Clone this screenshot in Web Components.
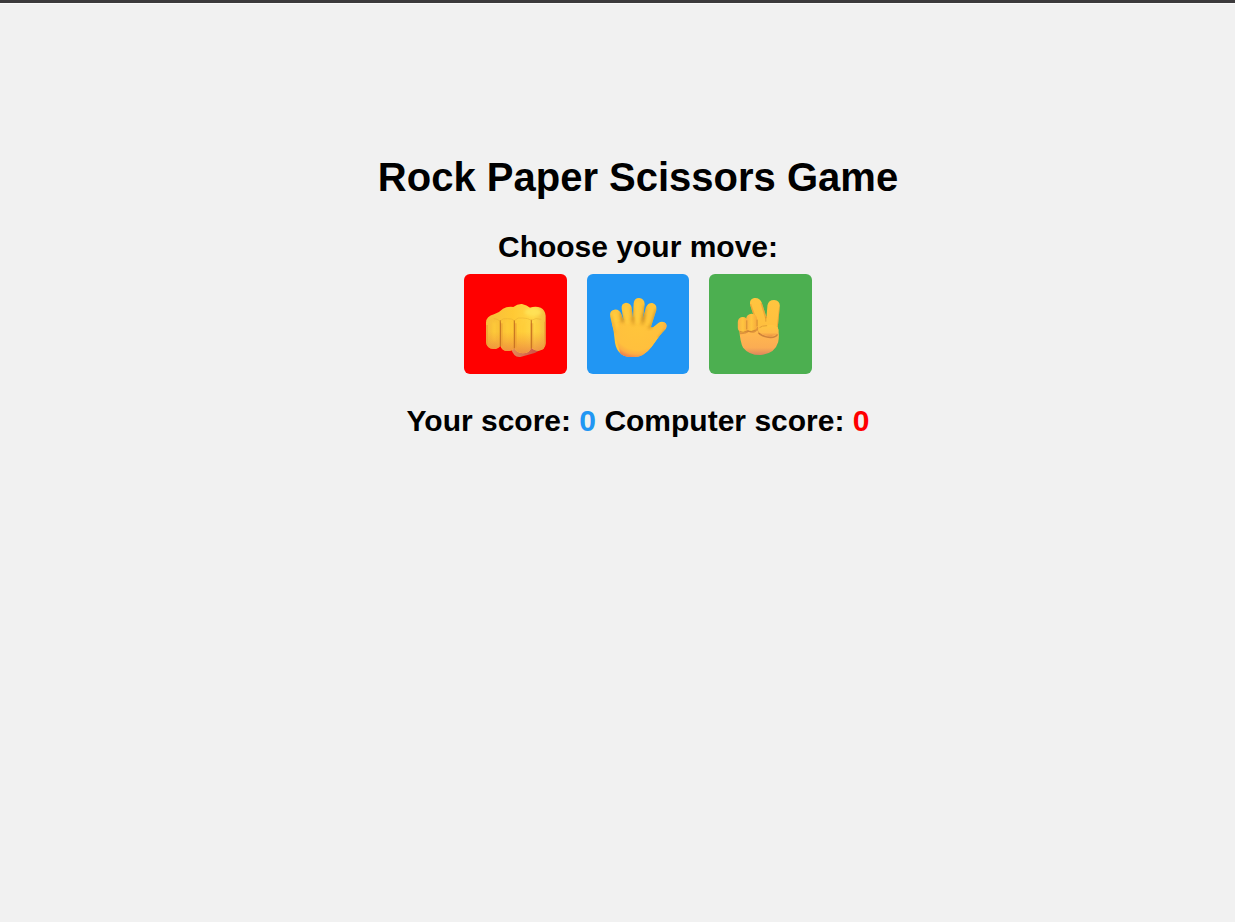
<!DOCTYPE html>
<html lang="en">
<head>
<meta charset="utf-8">
<title>Rock Paper Scissors Game</title>
<style>
html,body{margin:0;height:100%;background:#f1f1f1;overflow:hidden}
body{font-family:"Liberation Sans",Arial,sans-serif;color:#000}
</style>
</head>
<body>
<rps-game></rps-game>
<script>
const HANDS = {
rock: `<svg viewBox="12 12 307.5 300"><defs>
<linearGradient id="b" x1="0" y1="0" x2="1" y2="0"><stop offset="0" stop-color="#f6bd3c"/><stop offset=".45" stop-color="#ffc934"/><stop offset=".8" stop-color="#ffd646"/><stop offset="1" stop-color="#f2bd42"/></linearGradient>
<linearGradient id="s" gradientUnits="userSpaceOnUse" x1="0" y1="185" x2="0" y2="250"><stop offset="0" stop-color="#f08a38" stop-opacity="0"/><stop offset="1" stop-color="#e77a45" stop-opacity=".75"/></linearGradient>
<linearGradient id="t" x1="0" y1="0" x2="1" y2="0"><stop offset="0" stop-color="#e58a58"/><stop offset="1" stop-color="#c84944"/></linearGradient>
<filter id="q" x="-1" width="3"><feGaussianBlur stdDeviation="2.2"/></filter>
<filter id="r" x="-1" width="3"><feGaussianBlur stdDeviation="5"/></filter>
<path id="hand" d="M78 158Q79 138 102 133Q117 128 129 116Q143 109 160 111Q173 101 186 102Q201 105 210 113Q227 107 242 113Q255 119 257 137V220Q256 241 235 242Q222 242 214 233Q208 250 188 250Q169 249 163 234Q158 243 142 243Q126 243 121 227Q115 237 100 237Q80 236 78 216Z"/>
<clipPath id="c"><use href="#hand"/></clipPath></defs>
<path fill="url(#t)" d="M153 235Q161 264 181 261L224 249Q245 241 244 224Z"/>
<use href="#hand" fill="url(#b)"/>
<g clip-path="url(#c)">
<ellipse cx="219" cy="126" rx="25" ry="13" fill="#ffe45a" opacity=".8" filter="url(#r)"/>
<path d="M103 157V216M143 155V220M188 158V220M234 158V215" stroke="#ffce3a" stroke-width="10" opacity=".8" filter="url(#r)"/>
<use href="#hand" fill="url(#s)"/>
<path d="M80 165V225M124 160V228M166 160V232M216 160V233M256 155V230" stroke="#e99a32" stroke-width="8" opacity=".55" fill="none" filter="url(#q)"/>
<path d="M121 151V230M163 151V236M214 149V237" stroke="#bc651c" stroke-width="3.5" opacity=".8" fill="none" filter="url(#q)"/>
<path d="M101 146Q112 145 120 154Q128 143 142 146Q156 145 163 152Q173 140 188 144Q204 144 214 151Q227 142 244 148" stroke="#e6aa31" stroke-width="3" fill="none" opacity=".45" filter="url(#q)"/>
</g></svg>`,
paper: `<svg viewBox="14 12 307.5 300"><defs>
<radialGradient id="p" gradientUnits="userSpaceOnUse" cx="166" cy="166" r="105"><stop offset="0" stop-color="#ffc53b"/><stop offset=".7" stop-color="#ffc03d"/><stop offset=".83" stop-color="#fbad43"/><stop offset=".94" stop-color="#ee8050"/></radialGradient>
<filter id="q" x="-1" width="3"><feGaussianBlur stdDeviation="2.5"/></filter>
<filter id="r" x="-1" width="3"><feGaussianBlur stdDeviation="4"/></filter>
<path id="hand" d="M84 140Q80 122 96 119Q111 117 117 133L124 153L118 116Q116 100 131 98Q146 99 148 113L152 146L154 100Q156 84 170 84Q186 86 187 102L181 150L191 112Q197 98 210 99Q225 103 222 120L206 170Q209 176 218 167L228 159Q238 152 248 158Q257 165 249 178Q240 187 231 198L208 230Q184 261 155 261H141Q105 257 98 218L94 184Z"/>
<clipPath id="c"><use href="#hand"/></clipPath></defs>
<use href="#hand" fill="#ffc63b"/><path fill="url(#p)" d="M88 158L151 145L208 174L250 154L260 184L185 265H118Z" clip-path="url(#c)"/>
<g clip-path="url(#c)" fill="none">
<path stroke="#cd922d" stroke-width="7" opacity=".75" filter="url(#q)" d="M114 126L121 154M149 112L152 151M187 106L181 153M222 117L205 172M250 180L229 204"/>
<path stroke="#c98c22" stroke-width="8" opacity=".55" filter="url(#r)" d="M118 140L122 160M151 143L153 164M185 132L179 164M206 167L198 176"/>
<path stroke="#da9a2a" stroke-width="5" opacity=".45" filter="url(#q)" d="M193 113L183 158M86 137L97 190"/>
<path stroke="#ffd145" stroke-width="7" opacity=".7" filter="url(#q)" d="M96 129L105 173M130 109L135 162M167 96L164 160"/>
</g></svg>`,
scissors: `<svg viewBox="15.6 12 307.5 300"><defs>
<linearGradient id="f" x1="0" y1="0" x2="1" y2="0"><stop offset="0" stop-color="#f9b144"/><stop offset=".5" stop-color="#ffc540"/><stop offset="1" stop-color="#f6a93b"/></linearGradient>
<linearGradient id="p" gradientUnits="userSpaceOnUse" x1="0" y1="84" x2="0" y2="256"><stop offset="0" stop-color="#ffc53f"/><stop offset=".45" stop-color="#ffc03e"/><stop offset=".65" stop-color="#ffb64f"/><stop offset=".87" stop-color="#fbac53"/><stop offset="1" stop-color="#dc855d"/></linearGradient>
<linearGradient id="t" x1="0" y1="0" x2="0" y2="1"><stop offset="0" stop-color="#ffc63f"/><stop offset=".7" stop-color="#ffbb49"/><stop offset="1" stop-color="#ef9543"/></linearGradient>
<filter id="q" x="-1" y="-1" width="3" height="3"><feGaussianBlur stdDeviation="2.3"/></filter>
<path id="hand" d="M139 105Q136 88 151 84Q168 82 174 98L188 142L191 106Q194 90 211 90Q229 92 228 109L222 171Q228 196 223 217Q213 252 171 255Q136 256 118 233Q109 219 106 174L127 151L152 145Z"/>
<clipPath id="c"><use href="#hand"/></clipPath></defs>
<use href="#hand" fill="url(#p)"/>
<g clip-path="url(#c)" fill="none" filter="url(#q)">
<path stroke="#dd922f" stroke-width="6" opacity=".55" d="M139 102L154 145M173 99L187 145M229 110L222 171"/>
<path stroke="#c87832" stroke-width="6" opacity=".6" d="M108 190Q128 190 134 182Q150 191 161 175L170 191"/>
<path stroke="#b76830" stroke-width="5" opacity=".65" d="M164 188Q177 202 199 202Q215 203 221 193"/>
</g>
<rect fill="url(#f)" x="102" y="141" width="30" height="47" rx="15"/>
<rect fill="url(#f)" x="127" y="131" width="33" height="53" rx="16"/>
<path fill="none" stroke="#b8702b" stroke-width="3" opacity=".6" filter="url(#q)" d="M129 151V178M160 149V169M107 184Q118 190 129 183Q143 187 155 180"/>
<path fill="url(#t)" d="M163 182Q161 170 176 168Q190 164 206 165Q220 167 224 179Q224 194 207 197Q195 200 180 194Q166 191 163 182Z"/>
<path fill="none" stroke="#c98128" stroke-width="3" opacity=".55" filter="url(#q)" d="M167 173Q174 167 190 167M186 140V155"/>
</svg>`
};
customElements.define("move-button", class extends HTMLElement {
  connectedCallback(){
    const move=this.getAttribute("move");
    this.attachShadow({mode:"open"}).innerHTML=`<style>
:host{display:block;width:102.5px;height:100px}
button{display:block;width:100%;height:100%;padding:0;border:0;border-radius:6px;background:var(--move-color);cursor:pointer;overflow:hidden}
svg{display:block;width:100%;height:100%}
</style><button aria-label="${move}">${HANDS[move]}</button>`;
  }
});
customElements.define("score-value", class extends HTMLElement {
  constructor(){
    super();
    this.attachShadow({mode:"open"}).innerHTML=`<style>:host{display:inline;color:var(--score-color)}</style><slot></slot>`;
  }
});
customElements.define("rps-game", class extends HTMLElement {
  constructor(){
    super();
    this.attachShadow({mode:"open"}).innerHTML=`<style>
:host{display:block;box-sizing:border-box;height:922px;border-top:3px solid #3c3a3c;padding:151px 0 0 41px;background:#f1f1f1;text-align:center;box-shadow:inset 0 1px #fafafa}
h1{font-size:40px;line-height:46px;margin:0 0 30px}
h2{font-size:30px;line-height:34px;margin:0}
.moves{display:flex;justify-content:center;gap:20px;margin:10px 0 30px}
</style>
<h1>Rock Paper Scissors Game</h1>
<h2>Choose your move:</h2>
<div class="moves">
<move-button move="rock" style="--move-color:#ff0000"></move-button>
<move-button move="paper" style="--move-color:#2196f3"></move-button>
<move-button move="scissors" style="--move-color:#4caf50"></move-button>
</div>
<h2>Your score: <score-value style="--score-color:#2196f3">0</score-value> Computer score: <score-value style="--score-color:#ff0000">0</score-value></h2>`;
  }
});
</script>
</body>
</html>
